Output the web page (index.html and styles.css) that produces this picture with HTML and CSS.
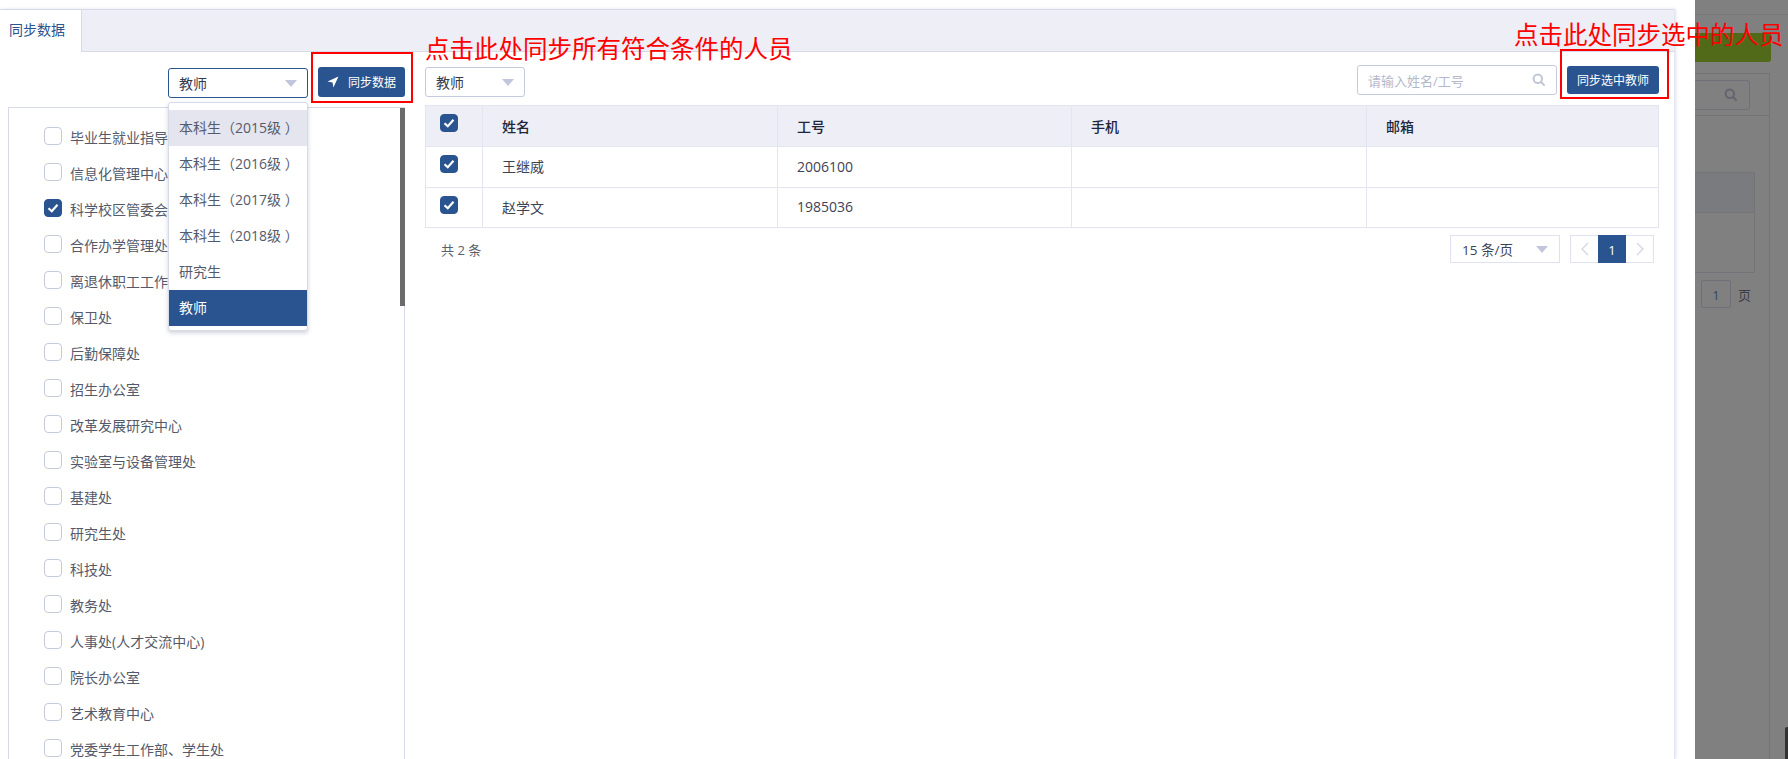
FILE: index.html
```html
<!DOCTYPE html>
<html lang="zh">
<head>
<meta charset="utf-8">
<title>同步数据</title>
<link rel="stylesheet" href="styles.css">
</head>
<body>
<div class="page">
  <div class="drawer">
    <div class="panel">
      <div class="tabs"><div class="tab">同步数据</div></div>
      <div class="content">
        <section class="left">
          <div class="left-tools">
            <div class="select active"><span>教师</span><i class="caret"></i></div>
            <button class="btn btn-sync"><svg class="plane" viewBox="0 0 12 12"><path d="M11.5.5 0.5 5.6 5.6 6.4 6.4 11.5Z"/></svg>同步数据</button>
          </div>
          <div class="tree">
            <div class="thumb"></div>
            <label class="node"><i class="cb"></i><span>毕业生就业指导中心</span></label>
            <label class="node"><i class="cb"></i><span>信息化管理中心</span></label>
            <label class="node"><i class="cb on"><svg viewBox="0 0 18 18"><path d="M4.5 9.2 7.8 12.2 13.5 5.8"/></svg></i><span>科学校区管委会</span></label>
            <label class="node"><i class="cb"></i><span>合作办学管理处</span></label>
            <label class="node"><i class="cb"></i><span>离退休职工工作处</span></label>
            <label class="node"><i class="cb"></i><span>保卫处</span></label>
            <label class="node"><i class="cb"></i><span>后勤保障处</span></label>
            <label class="node"><i class="cb"></i><span>招生办公室</span></label>
            <label class="node"><i class="cb"></i><span>改革发展研究中心</span></label>
            <label class="node"><i class="cb"></i><span>实验室与设备管理处</span></label>
            <label class="node"><i class="cb"></i><span>基建处</span></label>
            <label class="node"><i class="cb"></i><span>研究生处</span></label>
            <label class="node"><i class="cb"></i><span>科技处</span></label>
            <label class="node"><i class="cb"></i><span>教务处</span></label>
            <label class="node"><i class="cb"></i><span>人事处(人才交流中心)</span></label>
            <label class="node"><i class="cb"></i><span>院长办公室</span></label>
            <label class="node"><i class="cb"></i><span>艺术教育中心</span></label>
            <label class="node"><i class="cb"></i><span>党委学生工作部、学生处</span></label>
          </div>
          <ul class="dropdown">
            <li class="hover">本科生（2015级 ）</li>
            <li>本科生（2016级 ）</li>
            <li>本科生（2017级 ）</li>
            <li>本科生（2018级 ）</li>
            <li>研究生</li>
            <li class="selected">教师</li>
          </ul>
        </section>
        <section class="right">
          <div class="right-tools">
            <div class="select small"><span>教师</span><i class="caret"></i></div>
            <div class="search"><span>请输入姓名/工号</span><svg class="mag" viewBox="0 0 14 14"><circle cx="5.8" cy="5.8" r="4.2"/><path d="M9 9 12.6 12.6"/></svg></div>
            <button class="btn btn-selected">同步选中教师</button>
          </div>
          <div class="table">
            <div class="row head">
              <div class="c c0"><i class="cb on"><svg viewBox="0 0 18 18"><path d="M4.5 9.2 7.8 12.2 13.5 5.8"/></svg></i></div>
              <div class="c c1">姓名</div><div class="c c2">工号</div><div class="c c3">手机</div><div class="c c4">邮箱</div>
            </div>
            <div class="row">
              <div class="c c0"><i class="cb on"><svg viewBox="0 0 18 18"><path d="M4.5 9.2 7.8 12.2 13.5 5.8"/></svg></i></div>
              <div class="c c1">王继威</div><div class="c c2">2006100</div><div class="c c3"></div><div class="c c4"></div>
            </div>
            <div class="row">
              <div class="c c0"><i class="cb on"><svg viewBox="0 0 18 18"><path d="M4.5 9.2 7.8 12.2 13.5 5.8"/></svg></i></div>
              <div class="c c1">赵学文</div><div class="c c2">1985036</div><div class="c c3"></div><div class="c c4"></div>
            </div>
          </div>
          <div class="foot">
            <span class="total">共 2 条</span>
            <div class="page-size"><span>15 条/页</span><i class="caret"></i></div>
            <div class="pager">
              <span class="arrow"><svg viewBox="0 0 8 14"><path d="M7 1 1 7 7 13"/></svg></span>
              <span class="cur">1</span>
              <span class="arrow"><svg viewBox="0 0 8 14"><path d="M1 1 7 7 1 13"/></svg></span>
            </div>
          </div>
        </section>
      </div>
    </div>
  </div>
  <div class="backdrop">
    <div class="bg-green"></div>
    <div class="bg-box">
      <div class="bg-tools"><div class="bg-search"><svg class="mag dark" viewBox="0 0 14 14"><circle cx="5.8" cy="5.8" r="4.2"/><path d="M9 9 12.6 12.6"/></svg></div></div>
      <div class="bg-table"><div class="bg-head"></div></div>
      <div class="bg-pager"><span class="bg-num">1</span><span>页</span></div>
    </div>
    <div class="corner"></div>
  </div>
  <div class="mark mark-a"></div>
  <div class="mark mark-b"></div>
  <div class="note note-a">点击此处同步所有符合条件的人员</div>
  <div class="note note-b">点击此处同步选中的人员</div>
</div>
</body>
</html>
```
FILE: styles.css
```css
* { box-sizing: border-box; }
html, body { margin: 0; height: 100%; }
body {
  font-family: "Open Sans", "Noto Sans CJK SC", sans-serif;
  font-size: 14px;
  color: #4a4f60;
  background: #fff;
  overflow: hidden;
}
.page { position: relative; display: flex; width: 1788px; height: 759px; overflow: hidden; }

.drawer { width: 1695px; height: 100%; padding-top: 9px; background: #fff; flex: none; }
.panel {
  width: 1675px; height: 750px;
  border-right: 1px solid #e3e6f0;
  box-shadow: 1px 0 3px #dfe2ee;
}
.tabs { height: 43px; background: #edeef6; border-top: 1px solid #d7dae8; border-bottom: 1px solid #d7dae8; }
.tab {
  width: 82px; height: 42px; padding-left: 9px; line-height: 40px;
  background: #fff; color: #29548f; border-right: 1px solid #d7dae8;
}
.content { position: relative; display: flex; padding-left: 8px; }

.left { width: 397px; flex: none; }
.left-tools { display: flex; justify-content: flex-end; gap: 10px; padding-top: 15px; height: 55px; }
.select {
  display: flex; align-items: center; justify-content: space-between;
  width: 140px; height: 30px; margin-top: 1px; padding: 0 10px;
  background: #fff; border: 1px solid #c6cade; border-radius: 3px; color: #333a4c;
}
.select.active { border-color: #29548f; }
.select.small { width: 100px; margin-top: 0; }
.caret { width: 0; height: 0; border: 6.5px solid transparent; border-top: 7px solid #c1c6dd; border-bottom: 0; }
.btn { border: 0; color: #fff; background: #29548f; border-radius: 3px; font: inherit; font-size: 12px; padding: 0; }
.btn-sync { display: flex; align-items: center; justify-content: center; width: 87px; height: 30px; }
.plane { width: 12px; height: 12px; margin-right: 9px; fill: #fff; }

.tree {
  position: relative; height: 660px; border: 1px solid #d7dae8; padding-top: 10px;
}
.thumb { position: absolute; top: 0; right: -1px; width: 5px; height: 198px; background: #6b6b6b; }
.node { display: flex; align-items: center; height: 36px; padding-left: 35px; }
.node span { margin-left: 8px; line-height: 20px; position: relative; top: 2px; white-space: nowrap; color: #555a6a; }
.cb {
  display: block; flex: none; width: 18px; height: 18px; background: #fff;
  border: 1px solid #c6cade; border-radius: 4px;
}
.cb svg { display: block; width: 18px; height: 18px; margin: -1px; fill: none; stroke: #fff; stroke-width: 2.2; }
.cb.on { background: #29548f; border-color: #29548f; }

.dropdown {
  position: absolute; left: 168px; top: 50px; width: 140px; height: 229px; margin: 0; padding: 7px 0;
  list-style: none; background: #fff; border: 1px solid #d7dae8; border-radius: 3px;
  box-shadow: 0 2px 4px rgba(120,125,150,.35);
  z-index: 2;
}
.dropdown li { height: 36px; line-height: 36px; padding-left: 10px; color: #555a6a; white-space: nowrap; }
.dropdown .hover { background: #e4e5ef; }
.dropdown .selected { background: #29548f; color: #fff; }

.right { width: 1234px; margin-left: 20px; flex: none; }
.right-tools { display: flex; align-items: flex-start; height: 53px; padding-top: 15px; }
.search {
  display: flex; align-items: center; justify-content: space-between;
  width: 200px; height: 30px; margin-left: auto; margin-top: -2px; padding: 0 10px 0 10px;
  border: 1px solid #c6cade; border-radius: 3px; color: #b4b8cc; font-size: 13px;
}
.mag { width: 14px; height: 14px; fill: none; stroke: #c1c6d6; stroke-width: 2; }
.mag.dark { stroke: #62646e; }
.btn-selected { width: 92px; height: 28px; margin-left: 10px; margin-top: -1px; }

.table { border: 1px solid #e3e5f0; }
.row { display: flex; height: 41px; border-bottom: 1px solid #e3e5f0; }
.row:last-child { height: 39px; border-bottom: 0; }
.row.head { background: #edeef6; font-weight: 500; }
.c { display: flex; align-items: center; padding-left: 19px; padding-bottom: 2px; border-right: 1px solid #e3e5f0; color: #3e4354; }
.head .c { color: #22263a; padding-bottom: 0; }
.c:last-child { border-right: 0; }
.head .c0, .c0 { width: 57px; padding: 0 0 6px 14px; }
.c1 { width: 295px; }
.c2 { width: 294px; }
.c3 { width: 295px; }
.c4 { flex: 1; }

.foot { display: flex; align-items: center; padding-top: 7px; font-size: 13px; }
.total { margin-left: 16px; margin-right: auto; color: #5a5f70; }
.page-size {
  display: flex; align-items: center; justify-content: space-between;
  width: 110px; height: 28px; padding: 0 11px; border: 1px solid #dfe2ee; color: #3e4354; font-size: 13.5px;
}
.pager { display: flex; width: 84px; height: 28px; margin-left: 10px; margin-right: 5px; border: 1px solid #dfe2ee; }
.arrow { display: flex; align-items: center; justify-content: center; flex: 1; }
.arrow svg { width: 8px; height: 14px; fill: none; stroke: #d5d8e6; stroke-width: 1.4; }
.cur { width: 28px; flex: none; margin: -1px 0; background: #29548f; color: #fff; text-align: center; line-height: 30px; }

.backdrop { position: relative; flex: 1; height: 100%; padding-top: 33px; background: #808080; }
.backdrop::before { content: ""; position: absolute; left: 0; right: 0; top: 14px; height: 1px; background: #787878; }
.bg-green { width: 76px; height: 29px; background: #516a1a; border-radius: 0 0 3px 0; }
.bg-box { width: 75px; height: 686px; margin-top: 11px; border: solid #747478; border-width: 1px 1px 0 0; }
.bg-tools { height: 42px; border-bottom: 1px solid #747478; padding-top: 6px; }
.bg-search { display: flex; align-items: center; justify-content: flex-end; width: 55px; height: 30px; padding-right: 11px; border: solid #6f7078; border-width: 1px 1px 1px 0; border-radius: 0 3px 3px 0; }
.bg-table { width: 60px; height: 101px; margin-top: 56px; border: solid #747478; border-width: 1px 1px 1px 0; }
.bg-head { height: 40px; background: #7a7b7f; border-bottom: 1px solid #747478; }
.bg-pager { display: flex; align-items: center; gap: 7px; margin-top: 7px; padding-left: 6px; color: #3a3c44; font-size: 13px; }
.bg-num { width: 30px; height: 28px; border: 1px solid #6f7078; border-radius: 2px; text-align: center; line-height: 28px; color: #33485f; }
.corner { position: absolute; right: 0; top: 727px; width: 3px; height: 32px; background: #333; border-radius: 2px 0 0 0; }

.mark { position: absolute; border: 2px solid #f00; }
.mark-a { left: 311px; top: 52px; width: 102px; height: 51px; }
.mark-b { left: 1560px; top: 49px; width: 109px; height: 50px; }
.note { position: absolute; color: #f00; font-size: 24.5px; line-height: 30px; white-space: nowrap; font-family: "Noto Sans CJK SC", sans-serif; }
.note-a { left: 425px; top: 33px; }
.note-b { left: 1514px; top: 19px; }
```
